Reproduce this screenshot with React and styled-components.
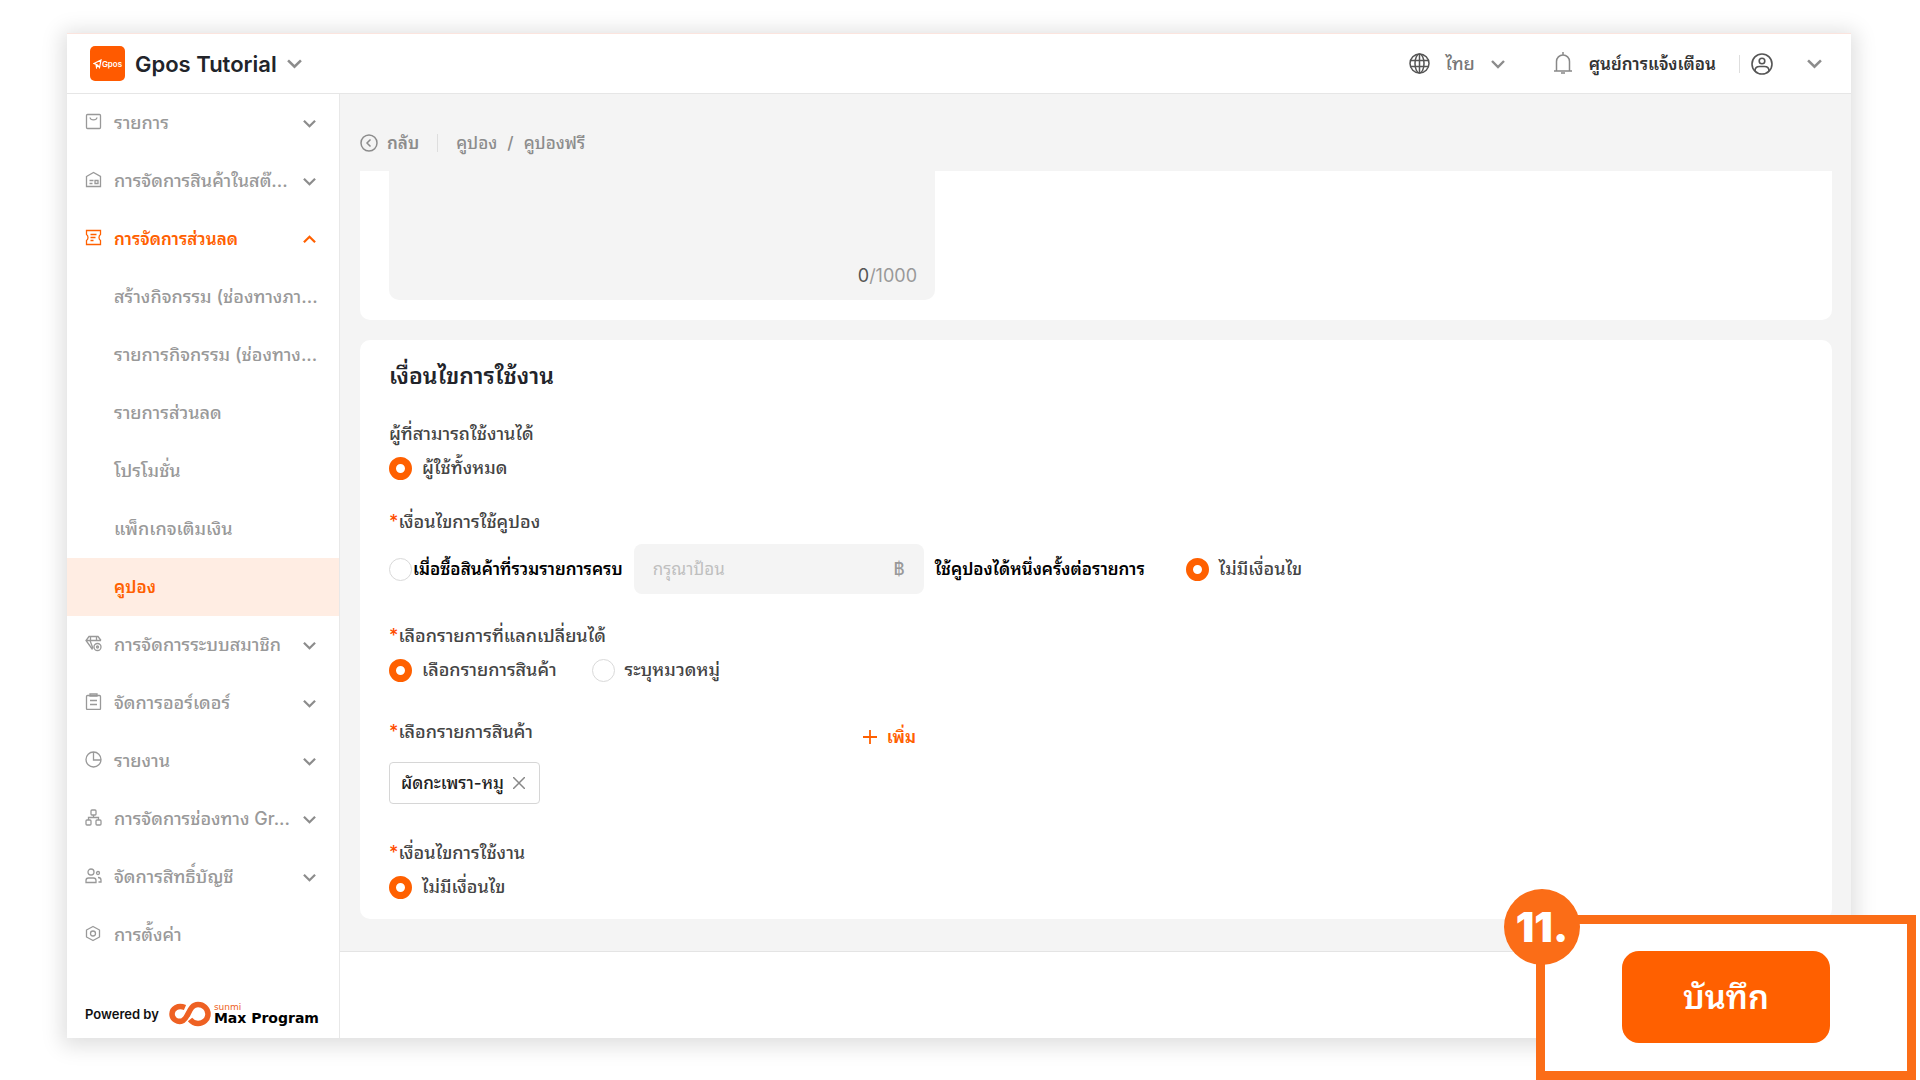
import React, { useState } from "react";
import styled, { createGlobalStyle } from "styled-components";

const GlobalStyle = createGlobalStyle`
  * {
    box-sizing: border-box;
  }
  body {
    margin: 0;
    background: #ffffff;
    color: #444444;
    font-family: Inter, "Noto Sans Thai Looped", "Noto Looped Thai", Loma, Garuda, Waree, "Noto Sans Thai", sans-serif;
    font-size: 18px;
    line-height: 24px;
  }
  button, input, textarea {
    font-family: inherit;
    font-size: inherit;
    line-height: inherit;
  }
  button {
    border: none;
    background: none;
    padding: 0;
    color: inherit;
    cursor: pointer;
  }
  a {
    color: inherit;
    text-decoration: none;
  }
`;

const Page = styled.div`
  position: relative;
  display: flex;
  min-height: 100vh;
  padding: 33px 69px 42px 67px;
`;

const Window = styled.div`
  flex: 1;
  display: flex;
  flex-direction: column;
  background: #ffffff;
  border-top: 1px solid #fbe4de;
  box-shadow: 0 3px 20px 5px rgba(0, 0, 0, 0.13);
`;

const Header = styled.header`
  display: flex;
  align-items: center;
  height: 60px;
  padding: 0 29px 0 23px;
  border-bottom: 1px solid #e6e6e6;
`;

const Logo = styled.span`
  display: flex;
  align-items: center;
  justify-content: center;
  width: 35px;
  height: 35px;
  border-radius: 5px;
  background: #ff5a00;
  color: #ffffff;
  font-size: 8px;
  font-weight: 600;
`;

const ShopButton = styled.button`
  display: flex;
  align-items: center;
  gap: 10px;
  margin-right: auto;
  color: #22242a;
  font-size: 22px;
  font-weight: 600;
`;

const HeaderButton = styled.button`
  display: flex;
  align-items: center;
  gap: 16px;
  margin-left: ${({ $space }) => $space || 0}px;
  color: ${({ $dark }) => ($dark ? "#333333" : "#777777")};
  font-size: ${({ $dark }) => ($dark ? 17 : 18)}px;
  font-weight: ${({ $dark }) => ($dark ? 600 : 500)};
`;

const Divider = styled.span`
  width: 1px;
  height: 18px;
  margin: 0 ${({ $right }) => $right}px 0 ${({ $left }) => $left}px;
  background: #dedede;
`;

const Body = styled.div`
  flex: 1;
  display: flex;
`;

const Sidebar = styled.aside`
  display: flex;
  flex-direction: column;
  flex: 0 0 273px;
  min-width: 0;
  border-right: 1px solid #e8e8e8;
`;

const MenuItem = styled.a`
  display: flex;
  align-items: center;
  height: 58px;
  padding: 0 23px 0 ${({ $child }) => ($child ? 47 : 18)}px;
  color: ${({ $active }) => ($active ? "#ff6000" : "#999999")};
  background: ${({ $selected }) => ($selected ? "#ffede3" : "transparent")};
  font-size: ${({ $active }) => ($active ? 17 : 18)}px;
  font-weight: ${({ $active }) => ($active ? 600 : 500)};
  white-space: nowrap;
`;

const MenuIcon = styled.span`
  display: flex;
  width: 29px;
  padding-bottom: 3px;
`;

const MenuText = styled.span`
  flex: 1;
  min-width: 0;
`;

const Powered = styled.div`
  display: flex;
  align-items: center;
  margin-top: auto;
  padding: 0 18px 11px;
  color: #111111;
  font-size: 13px;
  font-weight: 600;
  white-space: nowrap;
`;

const BrandMark = styled.svg`
  flex: none;
  margin: 0 2px 0 10px;
`;

const BrandText = styled.span`
  display: flex;
  flex-direction: column;
  color: #000000;
  font-family: "DejaVu Sans", sans-serif;
  font-size: 14px;
  font-weight: 700;
  line-height: 15px;
`;

const BrandSmall = styled.small`
  color: #ee6123;
  font-size: 9px;
  font-weight: 400;
  line-height: 8px;
`;

const Main = styled.main`
  flex: 1;
  display: flex;
  flex-direction: column;
  min-width: 0;
  background: #f4f4f4;
`;

const Breadcrumb = styled.nav`
  display: flex;
  align-items: center;
  padding: 37px 20px 16px;
  color: #8c8c8c;
  font-size: 17px;
  font-weight: 500;
`;

const BackButton = styled.button`
  display: flex;
  align-items: center;
  gap: 9px;
  font-weight: 600;
`;

const Slash = styled.span`
  margin: 0 10px;
`;

const Cards = styled.div`
  flex: 1;
  display: flex;
  flex-direction: column;
  gap: 20px;
  padding: 0 19px 32px 20px;
`;

const NoteCard = styled.section`
  padding: 0 29px 20px;
  border-radius: 0 0 10px 10px;
  background: #ffffff;
`;

const NoteBox = styled.div`
  display: flex;
  flex-direction: column;
  width: 546px;
  padding: 0 18px 12px;
  border-radius: 0 0 10px 10px;
  background: #f4f4f4;
`;

const NoteInput = styled.textarea`
  height: 93px;
  padding: 0;
  border: none;
  outline: none;
  resize: none;
  background: transparent;
`;

const Counter = styled.span`
  align-self: flex-end;
  color: #999999;
`;

const CounterNow = styled.span`
  color: #555555;
`;

const FormCard = styled.section`
  display: flex;
  flex-direction: column;
  gap: 30px;
  padding: 20px 29px;
  border-radius: 10px;
  background: #ffffff;
`;

const Title = styled.h2`
  margin: 0;
  color: #22242a;
  font-size: 23px;
  font-weight: 600;
  line-height: 32px;
`;

const Field = styled.fieldset`
  display: flex;
  flex-direction: column;
  gap: ${({ $tight }) => ($tight ? 0 : 10)}px;
  margin: 0;
  padding: 0;
  border: none;
  font-weight: 500;
`;

const FieldLabel = styled.div`
  color: #444444;
`;

const Required = styled.span`
  color: #ff4d00;
`;

const FieldHead = styled.div`
  display: flex;
  justify-content: space-between;
  width: 527px;
  height: 50px;
  padding-top: 8px;
`;

const AddButton = styled.button`
  display: flex;
  align-items: center;
  gap: 10px;
  height: 34px;
  color: #ff6000;
  font-size: 17px;
  font-weight: 600;
`;

const Options = styled.div`
  display: flex;
  align-items: center;
  gap: ${({ $gap }) => $gap || 35}px;
`;

const RadioLabel = styled.label`
  display: flex;
  align-items: center;
  gap: ${({ $strong }) => ($strong ? 1 : 10)}px;
  color: ${({ $strong }) => ($strong ? "#000000" : "#444444")};
  font-size: ${({ $strong }) => ($strong ? 17 : 18)}px;
  font-weight: ${({ $strong }) => ($strong ? 600 : 500)};
`;

const RadioInput = styled.input`
  appearance: none;
  width: 23px;
  height: 23px;
  margin: 0;
  border: 1px solid #d9d9d9;
  border-radius: 50%;
  background: #ffffff;

  &:checked {
    border: 7px solid #ff6000;
  }
`;

const AmountBox = styled.label`
  display: flex;
  align-items: center;
  width: 290px;
  height: 50px;
  padding: 0 19px;
  border-radius: 8px;
  background: #f4f4f4;
  color: #999999;
  font-size: 17px;
`;

const AmountInput = styled.input`
  flex: 1;
  min-width: 0;
  padding: 0;
  border: none;
  outline: none;
  background: transparent;

  &::placeholder {
    color: #bfbfbf;
    opacity: 1;
  }
`;

const StrongText = styled.span`
  color: #000000;
  font-size: 17px;
  font-weight: 600;
`;

const TagRow = styled.div`
  display: flex;
  padding-bottom: 7px;
`;

const Tag = styled.span`
  display: flex;
  align-items: center;
  gap: 9px;
  height: 42px;
  padding: 0 14px 0 11px;
  border: 1px solid #d6d6d6;
  border-radius: 4px;
  color: #222222;
  font-size: 17px;
`;

const TagClose = styled.button`
  display: flex;
  color: #888888;
`;

const Footer = styled.footer`
  height: 87px;
  border-top: 1px solid #e4e4e4;
  background: #ffffff;
`;

// highlighted step, sits over the corner of the window
const Callout = styled.div`
  position: absolute;
  right: 4px;
  bottom: 0;
  display: flex;
  width: 380px;
  height: 165px;
  padding: 27px 77px;
  border: 9px solid #fb6d17;
  background: #ffffff;
`;

const StepBadge = styled.span`
  position: absolute;
  top: -35px;
  left: -41px;
  display: flex;
  align-items: center;
  justify-content: center;
  width: 76px;
  height: 76px;
  border-radius: 50%;
  background: #fb6d17;
  color: #ffffff;
  font-size: 41px;
  font-weight: 900;
`;

const SaveButton = styled.button`
  width: 208px;
  height: 92px;
  border-radius: 17px;
  background: #ff6000;
  color: #ffffff;
  font-size: 33px;
  font-weight: 600;
`;

const Chevron = ({ up, size = 13, color = "#8c8c8c" }) => (
  <svg width={size} height={size} viewBox="0 0 14 14" fill="none" stroke={color} strokeWidth="2.400">
    <path d={up ? "M1 10l6-6 6 6" : "M1 4l6 6 6-6"} />
  </svg>
);

const iconPaths = {
  list: (
    <>
      <rect x="1.5" y="1.5" width="14" height="14" rx="1" />
      <path d="M5 4.5c.6 3.200 6.400 3.200 7 0" />
    </>
  ),
  stock: (
    <>
      <path d="M1.500 5.500L8.500 1.500l7 4v10h-14z" />
      <path d="M4.500 9.500h4M4.500 12.500h3M10 9.500h3v3h-3z" />
    </>
  ),
  discount: (
    <>
      <path d="M1.500 1.500h14v4c-2 1.500-2 4.500 0 6v4h-14v-4c2-1.500 2-4.500 0-6z" />
      <path d="M5.500 5.500h6M5.500 8.500h5M5.500 11.500h3" />
    </>
  ),
  member: (
    <>
      <path d="M7.500 14.500L1 5.500l3-4h9l3 4M1 5.500h15M5 5.500l3 8M5.500 1.500V5M11.500 1.500V5" />
      <circle cx="12.500" cy="12" r="3.500" />
      <circle cx="12.500" cy="12" r="1" />
    </>
  ),
  order: (
    <>
      <rect x="1.500" y="2.500" width="14" height="14" rx="1" />
      <path d="M5 3V1h7v2zM5 7.500h7M5 11.500h7" />
    </>
  ),
  report: (
    <>
      <circle cx="8.500" cy="8.500" r="7.500" />
      <path d="M8.500 1v8H16" />
    </>
  ),
  channel: (
    <>
      <rect x="6" y="1" width="5" height="5" rx="1" />
      <rect x="1" y="11" width="5" height="5" rx="1" />
      <rect x="11" y="11" width="5" height="5" rx="1" />
      <path d="M8.500 6v2.500M3.500 11V8.500h10V11" />
    </>
  ),
  account: (
    <>
      <circle cx="6" cy="5" r="3" />
      <circle cx="13" cy="6" r="1.500" />
      <path d="M1 15.500v-2c0-1.500 1-2.500 2.500-2.500h5c1.500 0 2.500 1 2.500 2.500v2zM13 10.500c2 0 3 1 3 2.500v2h-2.500" />
    </>
  ),
  setting: (
    <>
      <path d="M8 1.500l6.500 3.500v7L8 15.500 1.500 12V5z" strokeLinejoin="round" />
      <circle cx="8" cy="8.500" r="2.500" />
    </>
  ),
};

const menu = [
  { text: "รายการ", icon: "list", arrow: true },
  { text: "การจัดการสินค้าในสต๊...", icon: "stock", arrow: true },
  { text: "การจัดการส่วนลด", icon: "discount", arrow: true, active: true },
  { text: "สร้างกิจกรรม (ช่องทางภา...", child: true },
  { text: "รายการกิจกรรม (ช่องทาง...", child: true },
  { text: "รายการส่วนลด", child: true },
  { text: "โปรโมชั่น", child: true },
  { text: "แพ็กเกจเติมเงิน", child: true },
  { text: "คูปอง", child: true, active: true, selected: true },
  { text: "การจัดการระบบสมาชิก", icon: "member", arrow: true },
  { text: "จัดการออร์เดอร์", icon: "order", arrow: true },
  { text: "รายงาน", icon: "report", arrow: true },
  { text: "การจัดการช่องทาง Gr...", icon: "channel", arrow: true },
  { text: "จัดการสิทธิ์บัญชี", icon: "account", arrow: true },
  { text: "การตั้งค่า", icon: "setting" },
];

const Radio = ({ name, children, strong, ...rest }) => (
  <RadioLabel $strong={strong}>
    <RadioInput type="radio" name={name} {...rest} />
    {children}
  </RadioLabel>
);

const App = () => {
  const [note, setNote] = useState("");

  return (
    <>
      <GlobalStyle />
      <Page>
        <Window>
          <Header>
            <ShopButton type="button">
              <Logo>
                <svg width="9" height="10" viewBox="0 0 9 10" fill="none" stroke="#fff" strokeWidth="1.2">
                  <path d="M1 4.500L8 1 6.500 8.500 4.500 6zM4.500 6l-1 2.500L3 5.500" />
                </svg>
                Gpos
              </Logo>
              Gpos Tutorial
              <Chevron size={15} />
            </ShopButton>
            <HeaderButton type="button">
              <svg width="21" height="21" viewBox="0 0 21 21" fill="none" stroke="#555" strokeWidth="1.5">
                <circle cx="10.500" cy="10.500" r="9.500" />
                <ellipse cx="10.500" cy="10.500" rx="4.500" ry="9.500" />
                <path d="M10.500 1v19M1.500 7.500h18M1.500 13.500h18" />
              </svg>
              ไทย
              <Chevron size={14} />
            </HeaderButton>
            <HeaderButton type="button" $dark $space={48}>
              <svg width="20" height="23" viewBox="0 0 20 23" fill="none" stroke="#888" strokeWidth="1.500">
                <path d="M1 19h18M3.500 19V9.500a6.500 6.500 0 0113 0V19M10 0v3M8 21h4" />
              </svg>
              ศูนย์การแจ้งเตือน
            </HeaderButton>
            <Divider $left={23} $right={11} />
            <HeaderButton type="button" aria-label="บัญชี">
              <svg width="22" height="22" viewBox="0 0 22 22" fill="none" stroke="#555" strokeWidth="1.600">
                <circle cx="11" cy="11" r="10" />
                <circle cx="11" cy="8" r="2.800" />
                <path d="M4 18c0-3 2-4.500 4.500-4.500h5c2.500 0 4.500 1.500 4.500 4.500" />
              </svg>
            </HeaderButton>
            <HeaderButton type="button" aria-label="เมนู" $space={34}>
              <Chevron size={15} />
            </HeaderButton>
          </Header>

          <Body>
            <Sidebar>
              {menu.map((item, index) => (
                <MenuItem
                  key={index}
                  href="#"
                  $child={item.child}
                  $active={item.active}
                  $selected={item.selected}
                >
                  {item.icon && (
                    <MenuIcon>
                      <svg width="17" height="17" viewBox="0 0 17 17" fill="none" stroke="currentColor" strokeWidth="1.300">
                        {iconPaths[item.icon]}
                      </svg>
                    </MenuIcon>
                  )}
                  <MenuText>{item.text}</MenuText>
                  {item.arrow && <Chevron up={item.active} color={item.active ? "#ff6000" : "#8c8c8c"} />}
                </MenuItem>
              ))}
              <Powered>
                Powered by
                <BrandMark width="43" height="26" viewBox="0 0 43 26" fill="none" stroke="#ee6123" strokeWidth="5.500">
                  <path d="M16 6.500c-7-3-13 1-13 6.500s6 9 11 6.500C20 16 20 3.500 29 3.500c5.500 0 10 4 10 9.500s-4.500 9.500-10 9.500c-3.500 0-6-1.500-8-4" />
                </BrandMark>
                <BrandText>
                  <BrandSmall>sunmi</BrandSmall>
                  Max Program
                </BrandText>
              </Powered>
            </Sidebar>

            <Main>
              <Breadcrumb>
                <BackButton type="button">
                  <svg width="18" height="18" viewBox="0 0 18 18" fill="none" stroke="#8c8c8c" strokeWidth="1.500">
                    <circle cx="9" cy="9" r="8" />
                    <path d="M10.500 5.500L7 9l3.500 3.500" />
                  </svg>
                  กลับ
                </BackButton>
                <Divider $left={18} $right={18} />
                <a href="#">คูปอง</a>
                <Slash>/</Slash>
                <span>คูปองฟรี</span>
              </Breadcrumb>

              <Cards>
                <NoteCard>
                  <NoteBox>
                    <NoteInput
                      aria-label="รายละเอียด"
                      maxLength={1000}
                      value={note}
                      onChange={(e) => setNote(e.target.value)}
                    />
                    <Counter>
                      <CounterNow>{note.length}</CounterNow>/1000
                    </Counter>
                  </NoteBox>
                </NoteCard>

                <FormCard>
                  <Title>เงื่อนไขการใช้งาน</Title>
                  <Field>
                    <FieldLabel>ผู้ที่สามารถใช้งานได้</FieldLabel>
                    <Options>
                      <Radio name="user" defaultChecked>ผู้ใช้ทั้งหมด</Radio>
                    </Options>
                  </Field>
                  <Field>
                    <FieldLabel><Required>*</Required>เงื่อนไขการใช้คูปอง</FieldLabel>
                    <Options $gap={41}>
                      <Options $gap={11}>
                        <Radio name="coupon" strong>เมื่อซื้อสินค้าที่รวมรายการครบ</Radio>
                        <AmountBox>
                          <AmountInput type="text" placeholder="กรุณาป้อน" />
                          ฿
                        </AmountBox>
                        <StrongText>ใช้คูปองได้หนึ่งครั้งต่อรายการ</StrongText>
                      </Options>
                      <Radio name="coupon" defaultChecked>ไม่มีเงื่อนไข</Radio>
                    </Options>
                  </Field>
                  <Field>
                    <FieldLabel><Required>*</Required>เลือกรายการที่แลกเปลี่ยนได้</FieldLabel>
                    <Options>
                      <Radio name="exchange" defaultChecked>เลือกรายการสินค้า</Radio>
                      <Radio name="exchange">ระบุหมวดหมู่</Radio>
                    </Options>
                  </Field>
                  <Field $tight>
                    <FieldHead>
                      <FieldLabel><Required>*</Required>เลือกรายการสินค้า</FieldLabel>
                      <AddButton type="button">
                        <svg width="14" height="14" viewBox="0 0 14 14" stroke="#ff6000" strokeWidth="1.800">
                          <path d="M7 0v14M0 7h14" />
                        </svg>
                        เพิ่ม
                      </AddButton>
                    </FieldHead>
                    <TagRow>
                      <Tag>
                        ผัดกะเพรา-หมู
                        <TagClose type="button" aria-label="ลบ">
                          <svg width="12" height="12" viewBox="0 0 12 12" stroke="currentColor" strokeWidth="1.500">
                            <path d="M0 0l12 12M12 0L0 12" />
                          </svg>
                        </TagClose>
                      </Tag>
                    </TagRow>
                  </Field>
                  <Field>
                    <FieldLabel><Required>*</Required>เงื่อนไขการใช้งาน</FieldLabel>
                    <Options>
                      <Radio name="condition" defaultChecked>ไม่มีเงื่อนไข</Radio>
                    </Options>
                  </Field>
                </FormCard>
              </Cards>
              <Footer />
            </Main>
          </Body>
        </Window>

        <Callout>
          <StepBadge>11.</StepBadge>
          <SaveButton type="button">บันทึก</SaveButton>
        </Callout>
      </Page>
    </>
  );
};

export default App;
